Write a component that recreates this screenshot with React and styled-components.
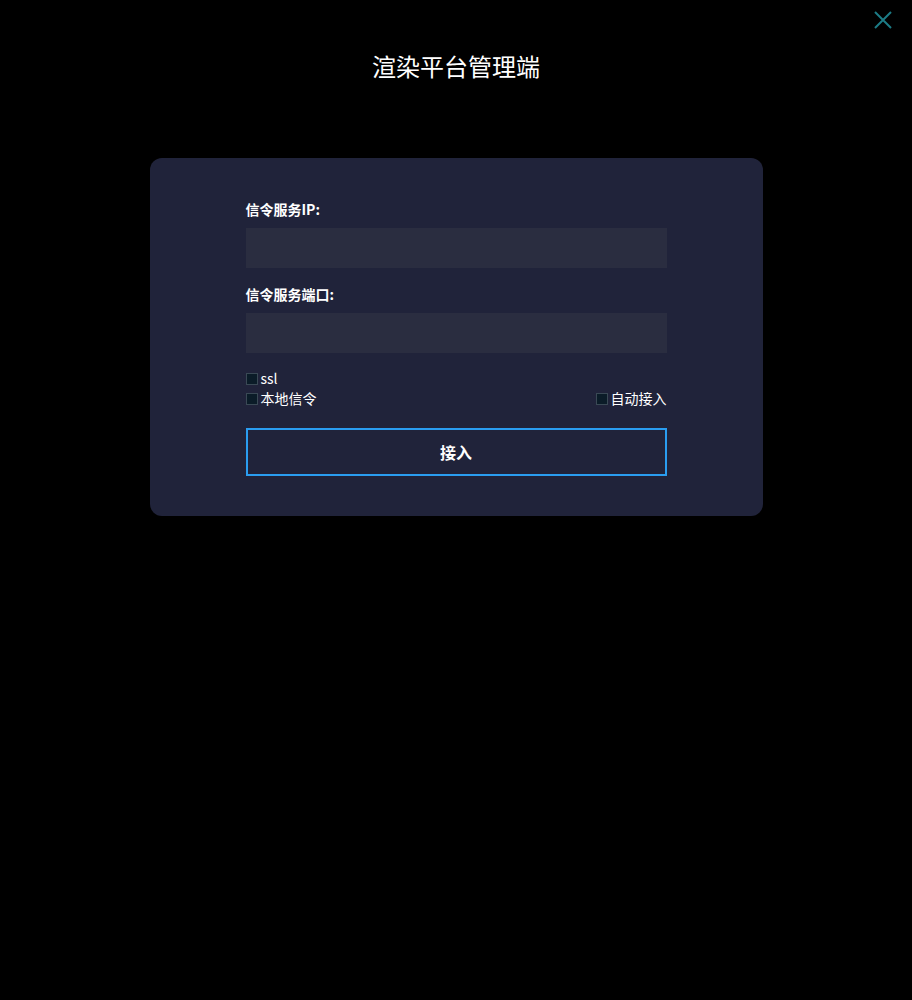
import React from "react";
import styled, { createGlobalStyle } from "styled-components";

const Global = createGlobalStyle`
  html, body { margin: 0; padding: 0; background: #000; }
  body { font-family: "Microsoft YaHei", "Noto Sans CJK SC", "Liberation Sans", sans-serif; color: #fff; }
  * { box-sizing: border-box; }
`;

const Page = styled.div`
  position: relative;
  min-height: 1000px;
  background: #000;
  display: flex;
  flex-direction: column;
  align-items: center;
`;

const Close = styled.button`
  position: absolute;
  top: 10px;
  right: 19px;
  width: 20px;
  height: 20px;
  padding: 0;
  border: none;
  background: transparent;
  cursor: pointer;
  display: flex;
  align-items: center;
  justify-content: center;
`;

const Title = styled.h1`
  margin: 47px 0 0;
  font-size: 24px;
  line-height: 38px;
  font-weight: 400;
  color: #fff;
`;

const Card = styled.div`
  margin-top: 73px;
  width: 613px;
  background: #20233a;
  border-radius: 12px;
  padding: 42px 96px 40px;
  display: flex;
  flex-direction: column;
`;

const Label = styled.label`
  font-size: 14px;
  font-weight: 700;
  line-height: 18px;
  color: #fff;
  margin-bottom: 10px;
  margin-top: ${(p) => p.$top || 0}px;
`;

const Input = styled.input`
  width: 100%;
  height: 40px;
  border: none;
  outline: none;
  background: #2a2d40;
  color: #fff;
  padding: 0 12px;
  font-size: 14px;
`;

const Options = styled.div`
  margin-top: 15px;
  display: flex;
  flex-direction: column;
`;

const OptRow = styled.div`
  display: flex;
  justify-content: space-between;
  align-items: center;
  height: 20px;
`;

const Check = styled.label`
  display: flex;
  align-items: center;
  gap: 3px;
  font-size: ${(p) => p.$size || 14}px;
  line-height: 20px;
  color: #fff;
  cursor: pointer;
`;

const Box = styled.span`
  flex: none;
  width: 12px;
  height: 12px;
  margin-top: 1px;
  background: #0b1c28;
  border: 1px solid #3a4955;
  display: inline-block;
`;

const Button = styled.button`
  margin-top: 20px;
  height: 48px;
  width: 100%;
  background: transparent;
  border: 2px solid #2a9df0;
  color: #fff;
  font-size: 16px;
  font-weight: 700;
  font-family: inherit;
  cursor: pointer;
`;

export default function App() {
  return (
    <>
      <Global />
      <Page>
        <Close aria-label="close">
          <svg width="18" height="18" viewBox="0 0 18 18">
            <path d="M1 1 L17 17 M17 1 L1 17" stroke="#1d7c86" strokeWidth="2" />
          </svg>
        </Close>
        <Title>渲染平台管理端</Title>
        <Card>
          <Label>信令服务IP:</Label>
          <Input />
          <Label $top={17}>信令服务端口:</Label>
          <Input />
          <Options>
            <OptRow>
              <Check><Box />ssl</Check>
            </OptRow>
            <OptRow>
              <Check><Box />本地信令</Check>
              <Check><Box />自动接入</Check>
            </OptRow>
          </Options>
          <Button>接入</Button>
        </Card>
      </Page>
    </>
  );
}
